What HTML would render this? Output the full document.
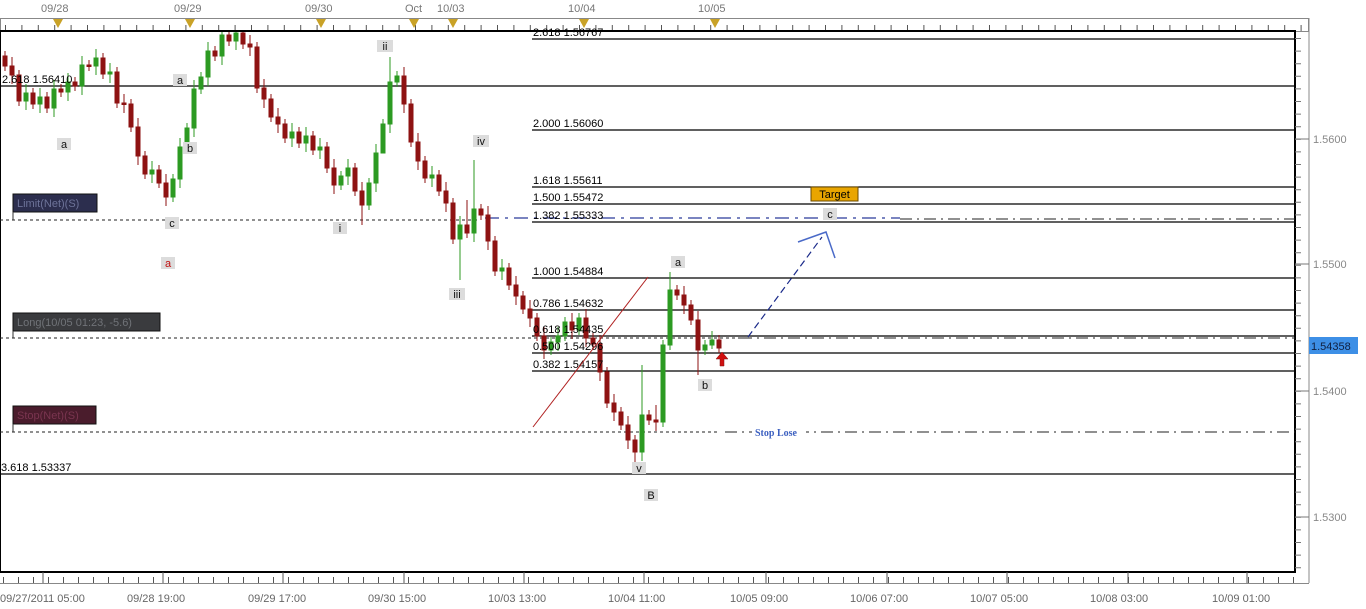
<!DOCTYPE html>
<html><head><meta charset="utf-8"><style>
html,body{margin:0;padding:0;background:#fff;}
svg{display:block;font-family:"Liberation Sans","DejaVu Sans",sans-serif;}
</style></head><body>
<svg width="1366" height="609" viewBox="0 0 1366 609" xmlns="http://www.w3.org/2000/svg">
<rect width="1366" height="609" fill="#fff"/>
<rect x="0.5" y="18.5" width="1308" height="13" fill="none" stroke="#888" stroke-width="1"/>
<line x1="5" y1="28" x2="1305" y2="28" stroke="#555" stroke-width="6" stroke-dasharray="1,15.4"/>
<g font-size="11" fill="#777">
<text x="41" y="12">09/28</text><text x="174" y="12">09/29</text><text x="305" y="12">09/30</text>
<text x="405" y="12">Oct</text><text x="437" y="12">10/03</text><text x="568" y="12">10/04</text><text x="698" y="12">10/05</text>
</g>
<g fill="#c9a227">
<path d="M53 19h10l-5 9z"/><path d="M185 19h10l-5 9z"/><path d="M316 19h10l-5 9z"/><path d="M409 19h10l-5 9z"/><path d="M448 19h10l-5 9z"/><path d="M579 19h10l-5 9z"/><path d="M710 19h10l-5 9z"/>
</g>
<rect x="0" y="31" width="1295" height="541" fill="none" stroke="#000" stroke-width="2"/>
<line x1="1309" y1="18" x2="1309" y2="583" stroke="#888"/>
<line x1="0" y1="583.5" x2="1309" y2="583.5" stroke="#888"/>
<line x1="1298" y1="38" x2="1298" y2="572" stroke="#777" stroke-width="6" stroke-dasharray="1,11.6"/>
<g stroke="#777"><line x1="1295" y1="139" x2="1309" y2="139"/><line x1="1295" y1="264" x2="1309" y2="264"/><line x1="1295" y1="391" x2="1309" y2="391"/><line x1="1295" y1="517" x2="1309" y2="517"/></g>
<g font-size="11" fill="#888">
<text x="1313" y="143">1.5600</text><text x="1313" y="268">1.5500</text><text x="1313" y="395">1.5400</text><text x="1313" y="521">1.5300</text>
</g>
<rect x="1309" y="337" width="49" height="17" fill="#3d8fe6"/>
<text x="1311" y="350" font-size="11" fill="#102040">1.54358</text>
<g font-size="11" fill="#666">
<text x="0" y="602">09/27/2011 05:00</text><text x="127" y="602">09/28 19:00</text><text x="248" y="602">09/29 17:00</text>
<text x="368" y="602">09/30 15:00</text><text x="488" y="602">10/03 13:00</text><text x="608" y="602">10/04 11:00</text>
<text x="730" y="602">10/05 09:00</text><text x="850" y="602">10/06 07:00</text><text x="970" y="602">10/07 05:00</text>
<text x="1090" y="602">10/08 03:00</text><text x="1212" y="602">10/09 01:00</text>
</g>
<line x1="3" y1="580" x2="1295" y2="580" stroke="#555" stroke-width="6" stroke-dasharray="1,14"/>
<g stroke="#555"><path d="M43 572v11M163 572v11M283 572v11M404 572v11M524 572v11M644 572v11M766 572v11M887 572v11M1007 572v11M1128 572v11M1247 572v11"/></g>
<g stroke="#000" stroke-width="1.2">
<line x1="532" y1="39" x2="1295" y2="39"/>
<line x1="0" y1="86" x2="1295" y2="86"/>
<line x1="532" y1="130" x2="1295" y2="130"/>
<line x1="532" y1="187" x2="1295" y2="187"/>
<line x1="532" y1="204" x2="1295" y2="204"/>
<line x1="532" y1="222" x2="1295" y2="222"/>
<line x1="532" y1="278" x2="1295" y2="278"/>
<line x1="532" y1="310" x2="1295" y2="310"/>
<line x1="532" y1="336" x2="1295" y2="336"/>
<line x1="532" y1="353" x2="1295" y2="353"/>
<line x1="532" y1="371" x2="1295" y2="371"/>
<line x1="0" y1="474" x2="1295" y2="474"/>
</g>
<g stroke="#222" stroke-width="1" stroke-dasharray="3,3">
<line x1="0" y1="220" x2="480" y2="220"/>
<line x1="0" y1="338" x2="740" y2="338"/>
<line x1="0" y1="432" x2="720" y2="432"/>
</g>
<g stroke="#222" stroke-width="1" stroke-dasharray="12,5,2,5">
<line x1="740" y1="338" x2="1295" y2="338"/>
<line x1="725" y1="432" x2="1295" y2="432"/>
<line x1="900" y1="219" x2="1295" y2="219"/>
</g>
<line x1="485" y1="218" x2="900" y2="218" stroke="#2a3a9a" stroke-width="1.3" stroke-dasharray="14,6,3,6"/>
<!-- red candles -->
<g fill="#8e1212" stroke="#8e1212" stroke-width="1">
<path d="M5 51V71M3 56h4v10h-4z"/>
<path d="M12 57V84M10 66h4v9h-4z"/>
<path d="M19 70V106M17 75h4v26h-4z"/>
<path d="M33 88V109M31 93h4v11h-4z"/>
<path d="M47 92V113M45 97h4v11h-4z"/>
<path d="M61 84V97M59 89h4v3h-4z"/>
<path d="M75 77V91M73 82h4v4h-4z"/>
<path d="M89 60V71M87 65h4v1.5h-4z"/>
<path d="M103 53V79M101 58h4v16h-4z"/>
<path d="M117 67V108M115 72h4v31h-4z"/>
<path d="M124 94V113M122 103h4v1.5h-4z"/>
<path d="M131 99V132M129 104h4v23h-4z"/>
<path d="M138 118V165M136 127h4v29h-4z"/>
<path d="M145 151V179M143 156h4v18h-4z"/>
<path d="M159 165V188M157 170h4v13h-4z"/>
<path d="M166 174V206M164 183h4v14h-4z"/>
<path d="M215 46V61M213 51h4v5h-4z"/>
<path d="M229 32V46M227 35h4v6h-4z"/>
<path d="M243 32V49M241 33h4v11h-4z"/>
<path d="M250 35V56M248 44h4v3h-4z"/>
<path d="M257 42V93M255 47h4v41h-4z"/>
<path d="M264 79V108M262 88h4v11h-4z"/>
<path d="M271 94V122M269 99h4v18h-4z"/>
<path d="M278 108V133M276 117h4v7h-4z"/>
<path d="M285 119V143M283 124h4v14h-4z"/>
<path d="M299 127V148M297 132h4v11h-4z"/>
<path d="M313 131V155M311 136h4v14h-4z"/>
<path d="M327 142V173M325 147h4v21h-4z"/>
<path d="M334 159V194M332 168h4v17h-4z"/>
<path d="M355 163V196M353 168h4v23h-4z"/>
<path d="M362 182V225M360 191h4v14h-4z"/>
<path d="M404 67V113M402 76h4v28h-4z"/>
<path d="M411 99V147M409 104h4v38h-4z"/>
<path d="M418 133V170M416 142h4v19h-4z"/>
<path d="M425 156V183M423 161h4v17h-4z"/>
<path d="M439 170V196M437 175h4v16h-4z"/>
<path d="M446 182V212M444 191h4v12h-4z"/>
<path d="M453 198V244M451 203h4v36h-4z"/>
<path d="M467 200V238M465 225h4v8h-4z"/>
<path d="M481 204V220M479 209h4v6h-4z"/>
<path d="M488 206V250M486 215h4v26h-4z"/>
<path d="M495 236V276M493 241h4v30h-4z"/>
<path d="M509 263V290M507 268h4v17h-4z"/>
<path d="M516 276V305M514 285h4v11h-4z"/>
<path d="M523 291V314M521 296h4v13h-4z"/>
<path d="M530 300V327M528 309h4v9h-4z"/>
<path d="M537 313V341M535 318h4v18h-4z"/>
<path d="M544 327V359M542 336h4v14h-4z"/>
<path d="M572 313V339M570 322h4v8h-4z"/>
<path d="M586 309V347M584 318h4v20h-4z"/>
<path d="M593 333V349M591 338h4v6h-4z"/>
<path d="M600 335V381M598 344h4v28h-4z"/>
<path d="M607 367V408M605 372h4v31h-4z"/>
<path d="M614 394V421M612 403h4v9h-4z"/>
<path d="M621 407V430M619 412h4v13h-4z"/>
<path d="M628 416V449M626 425h4v15h-4z"/>
<path d="M635 435V462M633 440h4v12h-4z"/>
<path d="M649 410V425M647 415h4v5h-4z"/>
<path d="M656 405V431M654 420h4v2h-4z"/>
<path d="M677 285V300M675 290h4v5h-4z"/>
<path d="M684 286V314M682 295h4v10h-4z"/>
<path d="M691 300V325M689 305h4v15h-4z"/>
<path d="M698 311V375M696 320h4v30h-4z"/>
<path d="M719 335V353M717 340h4v8h-4z"/>
</g>
<!-- green candles -->
<g fill="#2c9a22" stroke="#2c9a22" stroke-width="1">
<path d="M26 84V110M24 93h4v8h-4z"/>
<path d="M40 88V113M38 97h4v7h-4z"/>
<path d="M54 80V117M52 89h4v19h-4z"/>
<path d="M68 73V101M66 82h4v10h-4z"/>
<path d="M82 56V95M80 65h4v21h-4z"/>
<path d="M96 49V75M94 58h4v8h-4z"/>
<path d="M110 63V83M108 72h4v2h-4z"/>
<path d="M152 161V183M150 170h4v4h-4z"/>
<path d="M173 174V202M171 179h4v18h-4z"/>
<path d="M180 138V188M178 147h4v32h-4z"/>
<path d="M187 123V152M185 128h4v19h-4z"/>
<path d="M194 80V137M192 89h4v39h-4z"/>
<path d="M201 72V94M199 77h4v12h-4z"/>
<path d="M208 42V86M206 51h4v26h-4z"/>
<path d="M222 32V65M220 35h4v21h-4z"/>
<path d="M236 32V50M234 33h4v8h-4z"/>
<path d="M292 123V147M290 132h4v6h-4z"/>
<path d="M306 127V152M304 136h4v7h-4z"/>
<path d="M320 138V159M318 147h4v3h-4z"/>
<path d="M341 171V190M339 176h4v9h-4z"/>
<path d="M348 159V185M346 168h4v8h-4z"/>
<path d="M369 178V210M367 183h4v22h-4z"/>
<path d="M376 144V192M374 153h4v30h-4z"/>
<path d="M383 119V129M381 124h4v29h-4z"/>
<path d="M390 57V133M388 82h4v42h-4z"/>
<path d="M397 71V87M395 76h4v6h-4z"/>
<path d="M432 166V187M430 175h4v3h-4z"/>
<path d="M460 216V280M458 225h4v14h-4z"/>
<path d="M474 160V242M472 209h4v24h-4z"/>
<path d="M502 259V280M500 268h4v3h-4z"/>
<path d="M551 337V355M549 342h4v8h-4z"/>
<path d="M558 327V351M556 336h4v6h-4z"/>
<path d="M565 317V341M563 322h4v14h-4z"/>
<path d="M579 313V335M577 318h4v12h-4z"/>
<path d="M642 365V461M640 415h4v37h-4z"/>
<path d="M663 340V427M661 345h4v77h-4z"/>
<path d="M670 272V350M668 290h4v55h-4z"/>
<path d="M705 340V355M703 345h4v5h-4z"/>
<path d="M712 331V349M710 340h4v5h-4z"/>
</g>
<g font-size="11" fill="#000">
<text x="533" y="36">2.618 1.56767</text>
<text x="2" y="83">2.618 1.56410</text>
<text x="533" y="127">2.000 1.56060</text>
<text x="533" y="184">1.618 1.55611</text>
<text x="533" y="201">1.500 1.55472</text>
<text x="533" y="219">1.382 1.55333</text>
<text x="533" y="275">1.000 1.54884</text>
<text x="533" y="307">0.786 1.54632</text>
<text x="533" y="333">0.618 1.54435</text>
<text x="533" y="350">0.500 1.54296</text>
<text x="533" y="368">0.382 1.54157</text>
<text x="1" y="471">3.618 1.53337</text>
</g>
<rect x="13" y="194" width="84" height="18" fill="#2c2e4e" stroke="#111"/>
<text x="17" y="207" font-size="11" fill="#6d7399">Limit(Net)(S)</text>
<line x1="13" y1="212" x2="13" y2="220" stroke="#333"/>
<rect x="13" y="313" width="147" height="18" fill="#3a3b3e" stroke="#111"/>
<text x="17" y="326" font-size="11" fill="#707378">Long(10/05 01:23, -5.6)</text>
<line x1="13" y1="331" x2="13" y2="338" stroke="#333"/>
<rect x="13" y="406" width="83" height="18" fill="#4a1c2c" stroke="#111"/>
<text x="17" y="419" font-size="11" fill="#7a3550">Stop(Net)(S)</text>
<line x1="13" y1="424" x2="13" y2="432" stroke="#333"/>
<g fill="#dcdcdc">
<rect x="57" y="138" width="14" height="12"/><rect x="173" y="74" width="14" height="12"/><rect x="183" y="142" width="14" height="12"/>
<rect x="165" y="217" width="14" height="12"/><rect x="161" y="257" width="14" height="12"/><rect x="333" y="222" width="14" height="12"/>
<rect x="377" y="40" width="16" height="12"/><rect x="449" y="288" width="16" height="12"/><rect x="473" y="135" width="16" height="12"/>
<rect x="632" y="462" width="14" height="12"/><rect x="644" y="489" width="14" height="12"/><rect x="671" y="256" width="14" height="12"/>
<rect x="698" y="379" width="14" height="12"/><rect x="823" y="208" width="14" height="12"/>
</g>
<g font-size="11" text-anchor="middle" fill="#111">
<text x="64" y="148">a</text><text x="180" y="84">a</text><text x="190" y="152">b</text><text x="172" y="227">c</text>
<text x="168" y="267" fill="#c01010">a</text><text x="340" y="232">i</text><text x="385" y="50">ii</text><text x="457" y="298">iii</text>
<text x="481" y="145">iv</text><text x="639" y="472">v</text><text x="651" y="499">B</text><text x="678" y="266">a</text>
<text x="705" y="389">b</text><text x="830" y="218">c</text>
</g>
<rect x="811" y="187" width="47" height="14" fill="#e9a500" stroke="#6a4a00"/>
<text x="834.5" y="198" font-size="11" fill="#000" text-anchor="middle">Target</text>
<line x1="533" y1="427" x2="648" y2="277" stroke="#b02020" stroke-width="1"/>
<line x1="748" y1="337" x2="822" y2="237" stroke="#1a2a8a" stroke-width="1.2" stroke-dasharray="7,4"/>
<path d="M798 242 L826 232 L835 258" fill="none" stroke="#4a6ac8" stroke-width="1.5"/>
<rect x="752" y="425" width="54" height="13" fill="#fff"/>
<text x="755" y="436" font-size="10" font-weight="bold" font-family="Liberation Serif,serif" fill="#3b5fc0">Stop Lose</text>
<path d="M722 352 l-6 7 h4 v7 h4 v-7 h4z" fill="#d01010" stroke="#801010" stroke-width="0.5"/>
</svg>
</body></html>
